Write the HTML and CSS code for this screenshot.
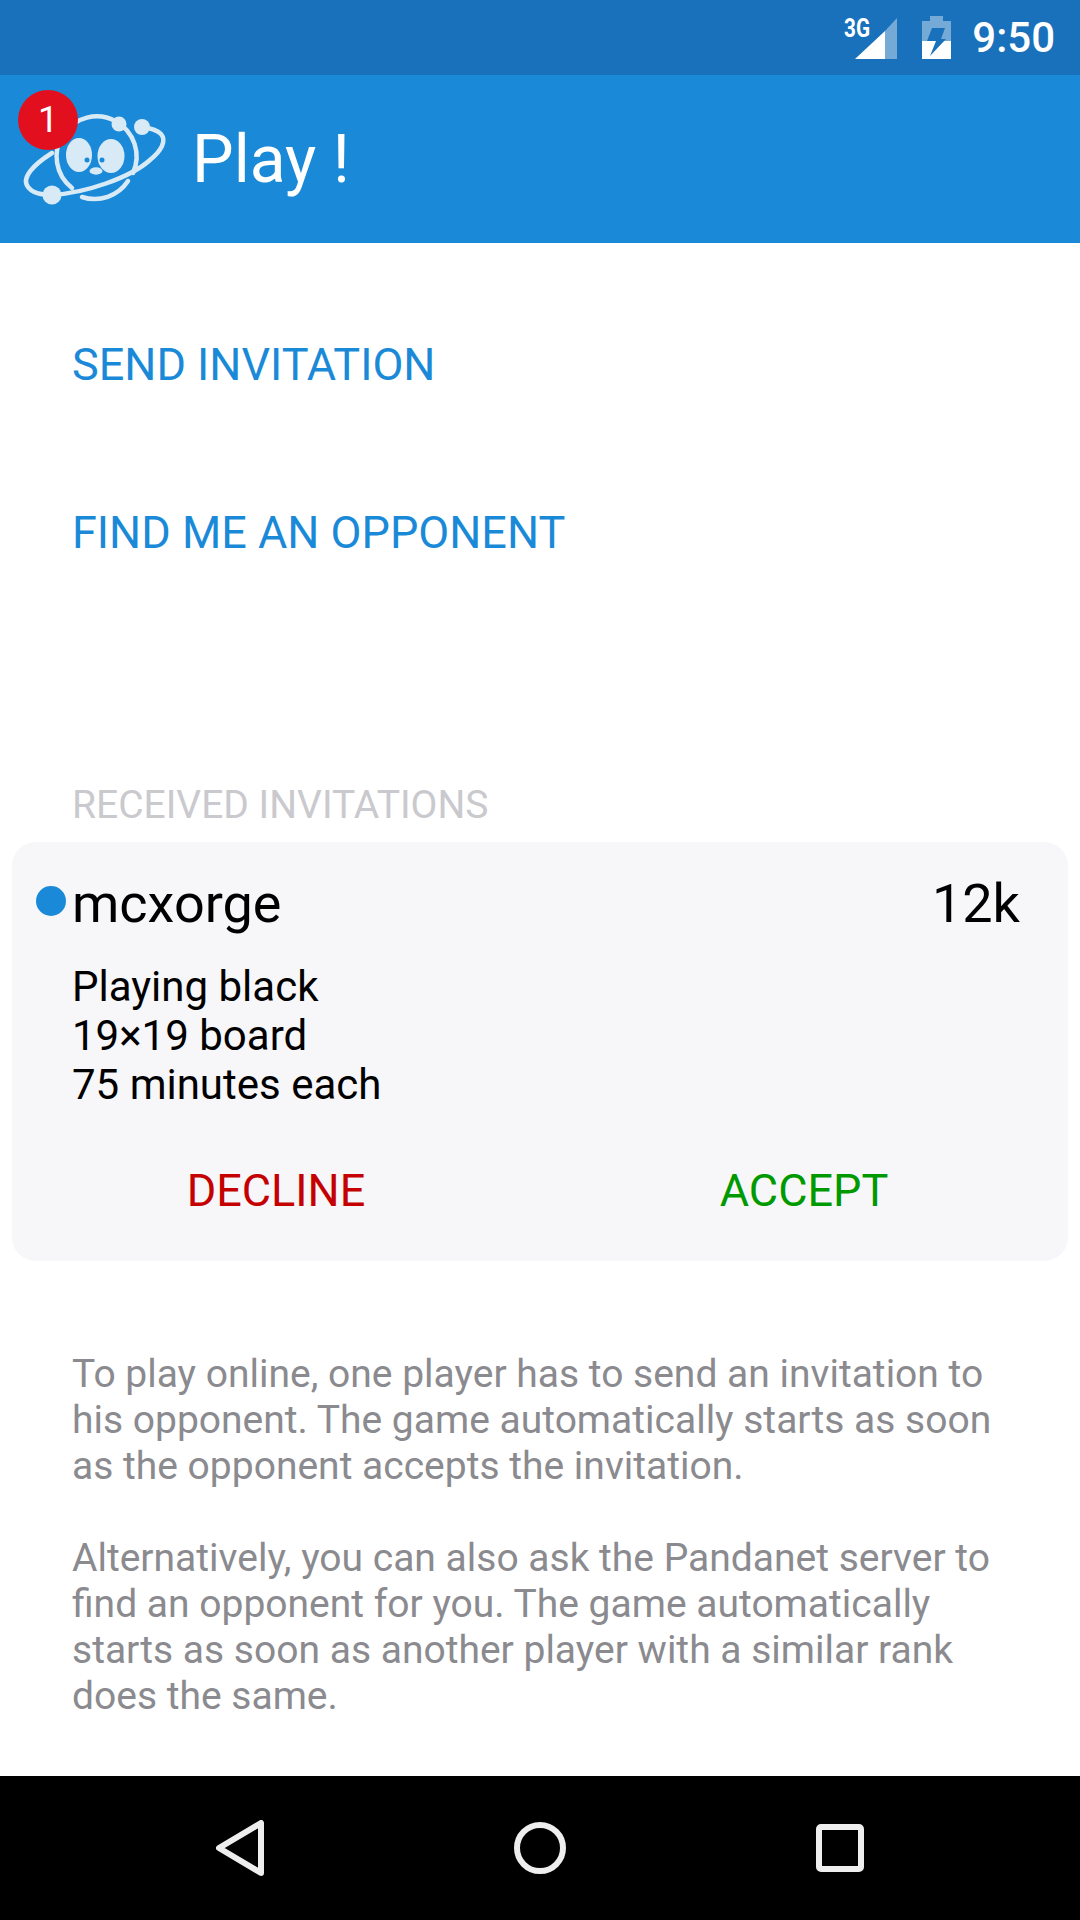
FILE: index.html
```html
<!DOCTYPE html>
<html lang="en">
<head>
  <meta charset="UTF-8" />
  <meta name="viewport" content="width=device-width, initial-scale=1.0" />
  <title>Play !</title>
  <link rel="stylesheet" href="styles.css">
</head>
<body>
  <div class="screen">
    <div class="status-bar">
      <svg class="status-icons" width="110" height="50" viewBox="0 0 110 50">
        <text class="net-label" x="0" y="24" textLength="26" lengthAdjust="spacingAndGlyphs">3G</text>
        <path d="M11 46 L41 18 V46 Z" fill="#fff" />
        <path d="M41 18 L53 5 V46 H41 Z" fill="#fff" opacity="0.4" />
        <path d="M86 3 H99 V8 H107 V46 H78 V8 H86 Z" fill="#fff" opacity="0.4" />
        <path d="M78 28 H107 V46 H78 Z" fill="#fff" />
        <path d="M88 15 H101 L97 26 H102 L86 43 L92 28 H83 Z" fill="#1a71bb" />
      </svg>
      <span class="clock">9:50</span>
    </div>

    <header class="app-bar">
      <div class="logo-wrap">
        <svg class="logo" width="160" height="116" viewBox="16 96 160 116">
          <g fill="none" stroke="#d8eaf6" stroke-width="4.5" stroke-linecap="round">
            <path d="M72 188 A40 40 0 1 1 133 173" />
            <path d="M82 197 A40 40 0 0 0 128 181" />
            <path d="M52 153 C33 165 21 178 28 187 C33 194 45 195 52 195 C85 193 130 178 150 160 C161 151 167 141 161 134 C157 130 150 128 142 127" />
          </g>
          <g fill="#d8eaf6">
            <circle cx="52" cy="195" r="9.5" />
            <circle cx="142" cy="127" r="8" />
            <circle cx="119" cy="124" r="7.5" />
            <ellipse cx="79" cy="155" rx="13" ry="17" />
            <ellipse cx="111" cy="156" rx="13.5" ry="17" />
            <ellipse cx="96" cy="171" rx="6.5" ry="3.7" />
          </g>
          <circle cx="87" cy="160" r="2.5" fill="#1a8ad8" />
          <circle cx="102" cy="160" r="2.5" fill="#1a8ad8" />
        </svg>
        <span class="badge">1</span>
      </div>
      <h1 class="app-title">Play !</h1>
    </header>

    <main class="content">
      <button class="link-btn">SEND INVITATION</button>
      <button class="link-btn">FIND ME AN OPPONENT</button>

      <h2 class="section-label">RECEIVED INVITATIONS</h2>

      <section class="card">
        <span class="dot"></span>
        <div class="card-head">
          <span class="player">mcxorge</span>
          <span class="rank">12k</span>
        </div>
        <div class="card-details">
          <div>Playing black</div>
          <div>19×19 board</div>
          <div>75 minutes each</div>
        </div>
        <div class="card-actions">
          <button class="action decline">DECLINE</button>
          <button class="action accept">ACCEPT</button>
        </div>
      </section>

      <div class="help">
        <p>To play online, one player has to send an invitation to his opponent. The game automatically starts as soon as the opponent accepts the invitation.</p>
        <p>Alternatively, you can also ask the Pandanet server to find an opponent for you. The game automatically starts as soon as another player with a similar rank does the same.</p>
      </div>
    </main>

    <nav class="nav-bar">
      <svg width="48" height="56" viewBox="0 0 48 56">
        <path d="M45 3 V53 L3 28 Z" class="nav-icon" />
      </svg>
      <svg width="52" height="52" viewBox="0 0 52 52">
        <circle cx="26" cy="26" r="23" class="nav-icon" />
      </svg>
      <svg width="48" height="48" viewBox="0 0 48 48">
        <rect x="3" y="3" width="42" height="42" rx="2" class="nav-icon" />
      </svg>
    </nav>
  </div>
</body>
</html>
```

FILE: styles.css
```css
:root {
  --blue: #1a8ad8;
  --blue-dark: #1a71bb;
}
* {
  box-sizing: border-box;
}
html, body {
  margin: 0;
  background-color: #fff;
}
.screen {
  width: 1080px;
  height: 1920px;
  display: flex;
  flex-direction: column;
  overflow: hidden;
  font-family: Roboto, "Liberation Sans", sans-serif;
}
.status-bar {
  height: 75px;
  background-color: var(--blue-dark);
  display: flex;
  justify-content: flex-end;
  align-items: center;
  padding-right: 25px;
  flex-shrink: 0;
}
.status-icons {
  margin-right: 18px;
}
.net-label {
  font-size: 25px;
  font-weight: 700;
  fill: #fff;
}
.clock {
  color: #fff;
  font-size: 42px;
  font-weight: 500;
}
.app-bar {
  height: 168px;
  background-color: var(--blue);
  display: flex;
  flex-shrink: 0;
  padding-left: 16px;
}
.logo-wrap {
  position: relative;
  width: 160px;
  height: 116px;
  margin: 21px 16px 0 0;
}
.logo {
  display: block;
}
.badge {
  position: absolute;
  left: 2px;
  top: -6px;
  width: 60px;
  height: 60px;
  border-radius: 50%;
  background-color: #e2101f;
  color: #fff;
  font-size: 36px;
  line-height: 60px;
  text-align: center;
}
.app-title {
  margin: 0;
  align-self: center;
  color: #fff;
  font-size: 66px;
  font-weight: 400;
}
.content {
  flex: 1;
  display: flex;
  flex-direction: column;
  align-items: flex-start;
  padding-top: 49px;
}
.link-btn {
  background: none;
  border: none;
  padding: 0 0 0 72px;
  height: 144px;
  margin-bottom: 24px;
  color: var(--blue);
  font-family: inherit;
  font-size: 45px;
  text-align: left;
}
.section-label {
  margin: 152px 0 0;
  padding-left: 72px;
  color: #c9c9ce;
  font-size: 39px;
  font-weight: 400;
  line-height: 50px;
}
.card {
  position: relative;
  width: 1056px;
  margin: 12px 0 0 12px;
  padding: 30px 48px 0 60px;
  height: 419px;
  background-color: #f7f6f8;
  border-radius: 24px;
}
.dot {
  position: absolute;
  left: 24px;
  top: 44px;
  width: 30px;
  height: 30px;
  border-radius: 50%;
  background-color: var(--blue);
}
.card-head {
  display: flex;
  justify-content: space-between;
  align-items: baseline;
  color: #000;
  font-size: 54px;
}
.card-details {
  margin-top: 27px;
  color: #000;
  font-size: 42px;
  line-height: 49px;
}
.card-actions {
  display: flex;
  margin: 46px 0 0 -60px;
  width: 1056px;
}
.action {
  flex: 1;
  background: none;
  border: none;
  padding: 0;
  font-family: inherit;
  font-size: 45px;
  height: 70px;
}
.decline {
  color: #c40000;
}
.accept {
  color: #009a00;
}
.help {
  padding: 0 72px;
  margin-top: 90px;
  color: #8a8a8f;
  font-size: 39px;
  line-height: 46px;
}
.help p {
  margin: 0 0 46px;
}
.nav-bar {
  height: 144px;
  flex-shrink: 0;
  background-color: #000;
  display: grid;
  grid-template-columns: repeat(3, 300px);
  justify-content: center;
  justify-items: center;
  align-items: center;
}
.nav-icon {
  fill: none;
  stroke: #eeeeee;
  stroke-width: 6px;
  stroke-linejoin: round;
}
```
